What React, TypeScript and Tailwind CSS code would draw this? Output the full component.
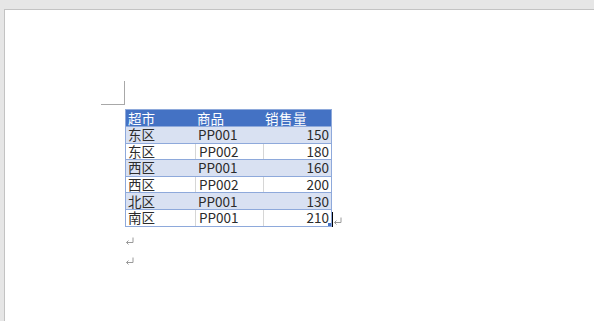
const rows = [
  { area: '东区', item: 'PP001', qty: 150 },
  { area: '东区', item: 'PP002', qty: 180 },
  { area: '西区', item: 'PP001', qty: 160 },
  { area: '西区', item: 'PP002', qty: 200 },
  { area: '北区', item: 'PP001', qty: 130 },
  { area: '南区', item: 'PP001', qty: 210 },
];

function ReturnMark({ className = '' }: { className?: string }) {
  return (
    <svg width="9" height="8" viewBox="0 0 9 8" className={className}>
      <path d="M8 0.5 V5.5 H1.5 M3.5 3.5 L1.5 5.5 L3.5 7.5" fill="none" stroke="#9a9a9a" strokeWidth="1" />
    </svg>
  );
}

export default function App() {
  return (
    <div
      className="w-[594px] h-[321px] bg-[#e6e6e6] pl-[4px] pt-[9px] overflow-hidden"
      style={{ fontFamily: '"Noto Sans CJK SC", "Noto Sans", sans-serif' }}
    >
      <div className="w-full h-full bg-white border-l border-t border-[#c3c3c3] pl-[96px] pt-[71px]">
        {/* corner margin mark */}
        <div className="w-[24px] h-[24px] border-r border-b border-[#a8a8a8]" />

        {/* table */}
        <div className="ml-[24px] mt-[4px] w-[207px] border border-[#8ea9db] text-[13.5px] leading-[15px] relative">
          <div className="grid grid-cols-[69px_68px_68px] h-[16px] bg-[#4472c4] text-white items-center">
            <div className="pl-[2px]">超市</div>
            <div className="pl-[2px]">商品</div>
            <div className="pl-[2px] tracking-[0.5px]">销售量</div>
          </div>
          {rows.map((r, i) => {
            const band = i % 2 === 0;
            return (
              <div
                key={i}
                className={
                  band
                    ? 'grid grid-cols-[69px_68px_68px] h-[16.6px] border-t border-[#8ea9db] bg-[#d9e1f2] text-[#2b2b2b] items-center'
                    : 'grid grid-cols-[69px_68px_68px] h-[16.6px] border-t border-[#8ea9db] bg-white text-[#2b2b2b] items-center'
                }
              >
                <div className="pl-[2px]">{r.area}</div>
                <div className={band ? 'pl-[3px] h-full flex items-center' : 'pl-[3px] h-full flex items-center border-l border-[#d6d6d6]'}>
                  {r.item}
                </div>
                <div className={band ? 'pr-[2px] h-full flex items-center justify-end' : 'pr-[2px] h-full flex items-center justify-end border-l border-[#d6d6d6]'}>
                  {r.qty}
                </div>
              </div>
            );
          })}
          {/* resize handle, cursor, end-of-row mark */}
          <div className="absolute right-[0px] bottom-[0px] w-[3px] h-[3px] bg-[#4472c4]" />
          <div className="absolute right-[-2px] bottom-[-1px] w-[1px] h-[15px] bg-black" />
          <ReturnMark className="absolute right-[-11px] bottom-[1px]" />
        </div>

        <div className="ml-[24px] mt-[10px] flex flex-col gap-[12px]">
          <ReturnMark />
          <ReturnMark />
        </div>
      </div>
    </div>
  );
}
